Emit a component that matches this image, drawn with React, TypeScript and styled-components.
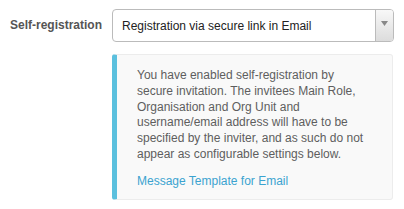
import React from "react";
import styled, { createGlobalStyle } from "styled-components";

const Global = createGlobalStyle`
  html, body { margin: 0; padding: 0; background: #fff; }
  body { font-family: "Liberation Sans", Arial, sans-serif; }
`;

const Page = styled.div`
  padding: 9px 10px 0 10px;
`;

const FieldRow = styled.div`
  display: grid;
  grid-template-columns: 102px 282px;
  row-gap: 12px;
`;

const Label = styled.label`
  font-size: 12px;
  font-weight: bold;
  color: #555;
  line-height: 33px;
`;

const Select = styled.div`
  height: 33px;
  box-sizing: border-box;
  border: 1px solid #bbb;
  border-radius: 4px;
  display: flex;
  align-items: stretch;
  overflow: hidden;
  background: #fff;
`;

const SelectValue = styled.div`
  flex: 1;
  padding-left: 9px;
  display: flex;
  align-items: center;
  font-size: 12px;
  color: #222;
`;

const ArrowButton = styled.div`
  width: 18px;
  border-left: 1px solid #bbb;
  background: linear-gradient(#f8f8f8, #dcdcdc);
  display: flex;
  align-items: flex-start;
  justify-content: center;
  padding-top: 11px;
  box-sizing: border-box;
`;

const Info = styled.div`
  grid-column: 2;
  box-sizing: border-box;
  width: 281px;
  background: #f9f9f9;
  border: 1px solid #ececec;
  border-left: 5px solid #5bc0de;
  border-radius: 3px;
  padding: 13px 22px 9px 20px;
  font-size: 12px;
  line-height: 15.8px;
  color: #5e5e5e;
`;

const Paragraph = styled.p`
  margin: 0 0 11px 0;
`;

const Link = styled.a`
  color: #3ba3d0;
  text-decoration: none;
  display: block;
`;

export default function App() {
  return (
    <>
      <Global />
      <Page>
        <FieldRow>
          <Label>Self-registration</Label>
          <Select>
            <SelectValue>Registration via secure link in Email</SelectValue>
            <ArrowButton>
              <svg width="7" height="5" viewBox="0 0 7 5">
                <path d="M0 0 H7 L3.5 5 Z" fill="#888" />
              </svg>
            </ArrowButton>
          </Select>
          <Info>
            <Paragraph>
              You have enabled self-registration by secure invitation. The invitees Main Role,
              Organisation and Org Unit and username/email address will have to be specified by
              the inviter, and as such do not appear as configurable settings below.
            </Paragraph>
            <Link href="#">Message Template for Email</Link>
          </Info>
        </FieldRow>
      </Page>
    </>
  );
}
